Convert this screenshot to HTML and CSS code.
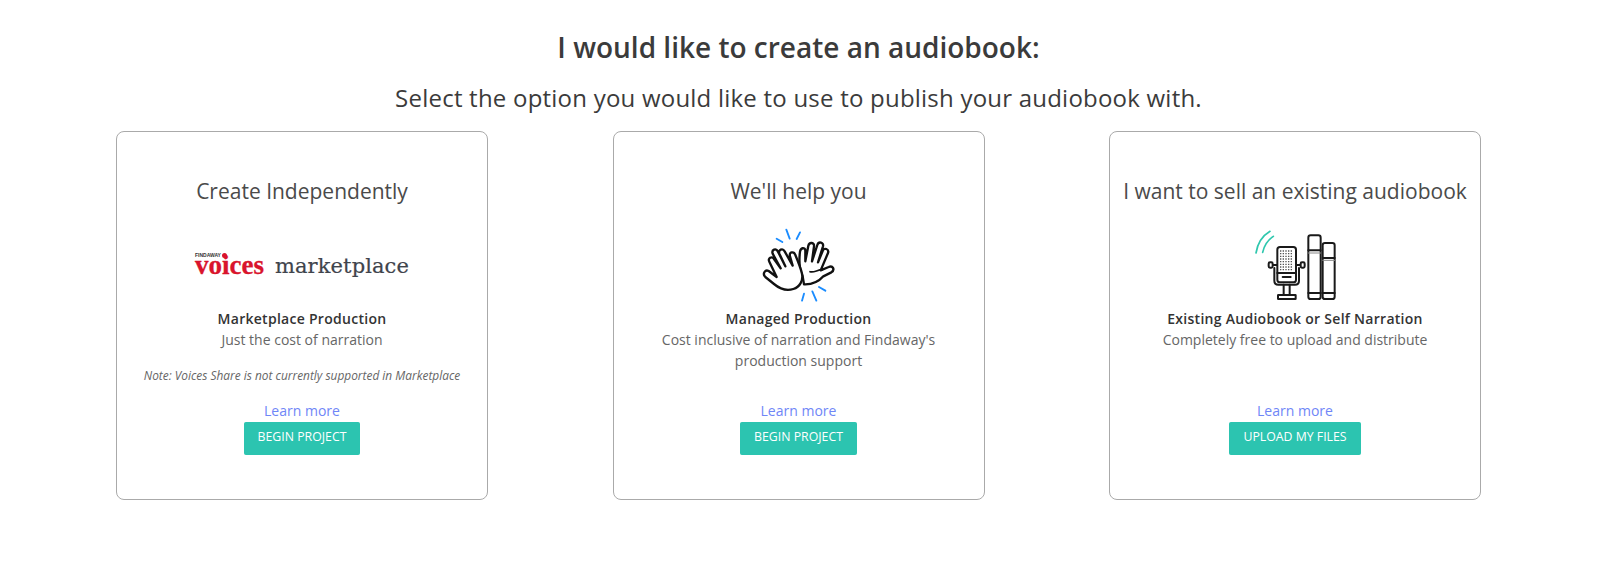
FILE: index.html
```html
<!DOCTYPE html>
<html lang="en">
<head>
<meta charset="utf-8">
<title>Create an audiobook</title>
<link rel="stylesheet" href="styles.css">
</head>
<body>
<main class="page">
  <h1 class="title">I would like to create an audiobook:</h1>
  <p class="subtitle">Select the option you would like to use to publish your audiobook with.</p>
  <section class="cards">
    <article class="card">
      <h2 class="card-title">Create Independently</h2>
      <div class="art">
        <div class="logo">
          <div class="voices">
            <span class="findaway">FINDAWAY<i class="dot"></i></span>
            <span class="voices-word">voices</span>
          </div>
          <span class="market">marketplace</span>
        </div>
      </div>
      <h3 class="name">Marketplace Production</h3>
      <p class="desc">Just the cost of narration</p>
      <p class="note">Note: Voices Share is not currently supported in Marketplace</p>
      <div class="actions">
        <a class="learn" href="#">Learn more</a>
        <a class="btn" href="#">BEGIN PROJECT</a>
      </div>
    </article>
    <article class="card">
      <h2 class="card-title">We'll help you</h2>
      <div class="art">
        <svg class="icon" width="120" height="90" viewBox="-5 -5 360 270" fill="none" stroke-linecap="round" stroke-linejoin="round">
          <g stroke="#1a8cff" stroke-width="5.5">
            <path d="M137 30l10 27M108 57l17 10M178 38l-10 20M190 222l-6 21M215 215l12 28M235 202l19 11"/>
          </g>
          <g stroke="#111" stroke-width="7" fill="#fff">
            <path d="M190 194C215 195 235 185 248 170L272 158C284 150 276 136 264 142L240 152L262 100C266 88 250 82 246 94L232 128L247 80C250 68 234 64 230 76L214 125L220 80C222 68 206 66 203 78L194 125L194 92C192 82 180 84 178 96C175 120 176 150 186 170Z"/>
            <path d="M208 156C220 160 230 150 245 150" fill="none" stroke-width="5"/>
            <path d="M108 172L84 154C74 148 64 162 74 172L100 193C118 208 140 214 158 208C178 202 188 182 184 162C180 145 172 125 164 106C160 94 144 96 148 110L156 138L132 95C126 84 112 90 116 102L134 140L112 96C106 84 92 90 96 102L120 146L100 118C94 108 80 116 86 126Z"/>
          </g>
        </svg>
      </div>
      <h3 class="name">Managed Production</h3>
      <p class="desc">Cost inclusive of narration and Findaway's production support</p>
      <div class="actions">
        <a class="learn" href="#">Learn more</a>
        <a class="btn" href="#">BEGIN PROJECT</a>
      </div>
    </article>
    <article class="card">
      <h2 class="card-title">I want to sell an existing audiobook</h2>
      <div class="art">
        <svg class="icon" width="120" height="90" viewBox="-15 -5 360 270" fill="none" stroke-linecap="round" stroke-linejoin="round">
          <g stroke="#2fc7ae" stroke-width="5">
            <path d="M48 100C52 75 65 50 90 35M68 98C72 80 85 60 100 50"/>
          </g>
          <g stroke="#1a1a1a" stroke-width="6" fill="#fff">
            <path d="M98 136H112M168 136H182" fill="none"/>
            <rect x="86" y="128" width="12" height="16" rx="4"/>
            <rect x="182" y="128" width="12" height="16" rx="4"/>
            <path d="M103 145V183Q103 195 115 195H165Q177 195 177 183V145" fill="none"/>
            <rect x="112" y="82" width="56" height="106" rx="8"/>
            <path d="M112 160H168" fill="none"/>
            <path d="M128 172H152" fill="none"/>
            <path d="M131 195V226M149 195V226" fill="none"/>
            <rect x="114" y="226" width="53" height="12" rx="1"/>
            <rect x="205" y="47" width="37" height="191" rx="7"/>
            <path d="M205 92H242M205 220H242" fill="none"/>
            <rect x="248" y="70" width="36" height="168" rx="7"/>
            <path d="M248 115H284M248 220H284" fill="none"/>
          </g>
          <g stroke="#888" stroke-width="3"><path d="M205 100H242M248 122H284"/></g>
          <g stroke="#555" stroke-width="4" stroke-linecap="butt" stroke-dasharray="4 4">
            <path d="M122 92V152M130 92V152M138 92V152M146 92V152M154 92V152"/>
          </g>
        </svg>
      </div>
      <h3 class="name">Existing Audiobook or Self Narration</h3>
      <p class="desc">Completely free to upload and distribute</p>
      <div class="actions">
        <a class="learn" href="#">Learn more</a>
        <a class="btn" href="#">UPLOAD MY FILES</a>
      </div>
    </article>
  </section>
</main>
</body>
</html>
```

FILE: styles.css
```css
* { box-sizing: border-box; }
html, body { margin: 0; padding: 0; background: #fff; }
body { font-family: "Open Sans", "Liberation Sans", sans-serif; color: #3a3a3a; height: 566px; overflow: hidden; }
.page { padding: 29px 3px 0 0; }
.title { margin: 0; text-align: center; font-size: 28px; line-height: 36px; font-weight: 600; color: #3b3b3b; }
.subtitle { margin: 17px 0 0; text-align: center; font-size: 24px; line-height: 32px; font-weight: 400; color: #3b3b3b; letter-spacing: .22px; }
.cards { display: flex; justify-content: center; gap: 124.5px; margin-top: 17px; }
.card { position: relative; width: 372px; height: 369px; border: 1px solid #aaa; border-radius: 8px; display: flex; flex-direction: column; align-items: center; padding: 44px 8px 0; text-align: center; }
.card-title { margin: 0; font-size: 21px; line-height: 30px; font-weight: 400; color: #4a4a4a; white-space: nowrap; }
.art { height: 102px; display: flex; align-items: flex-end; justify-content: center; }
.logo { display: flex; align-items: flex-end; gap: 11px; margin-bottom: 31px; }
.voices { display: flex; flex-direction: column; align-items: flex-start; margin-bottom: 5px; }
.findaway { font-family: "Liberation Sans", sans-serif; font-size: 5px; line-height: 5px; font-weight: 700; color: #333; display: flex; align-items: center; gap: 1px; }
.dot { width: 5px; height: 5px; border-radius: 50%; background: #d9142c; }
.voices-word { font-family: "Liberation Serif", serif; font-size: 27px; line-height: 14px; font-weight: 700; color: #d9142c; -webkit-text-stroke: .3px #d9142c; }
.market { font-family: "DejaVu Serif", serif; font-size: 21px; line-height: 22px; color: #3f444c; -webkit-text-stroke: .2px #3f444c; letter-spacing: .1px; }
.name { margin: 0; font-size: 14px; line-height: 21px; font-weight: 600; color: #333; letter-spacing: .28px; }
.desc { margin: 0; width: 290px; font-size: 14px; line-height: 21px; color: #666; }
.note { margin: 15px 0 0; font-size: 11.9px; line-height: 21px; font-style: italic; color: #666; white-space: nowrap; }
.actions { position: absolute; left: 0; right: 0; top: 269px; display: flex; flex-direction: column; align-items: center; }
.learn { font-size: 14px; line-height: 20px; color: #6f86f7; text-decoration: none; }
.btn { display: block; height: 33px; line-height: 28px; padding: 0 13px; margin-top: 1px; background: #2cc4b0; border: 1px solid #2cc4b0; border-radius: 1.5px; color: #fff; font-size: 12.3px; font-weight: 500; text-decoration: none; }
```
